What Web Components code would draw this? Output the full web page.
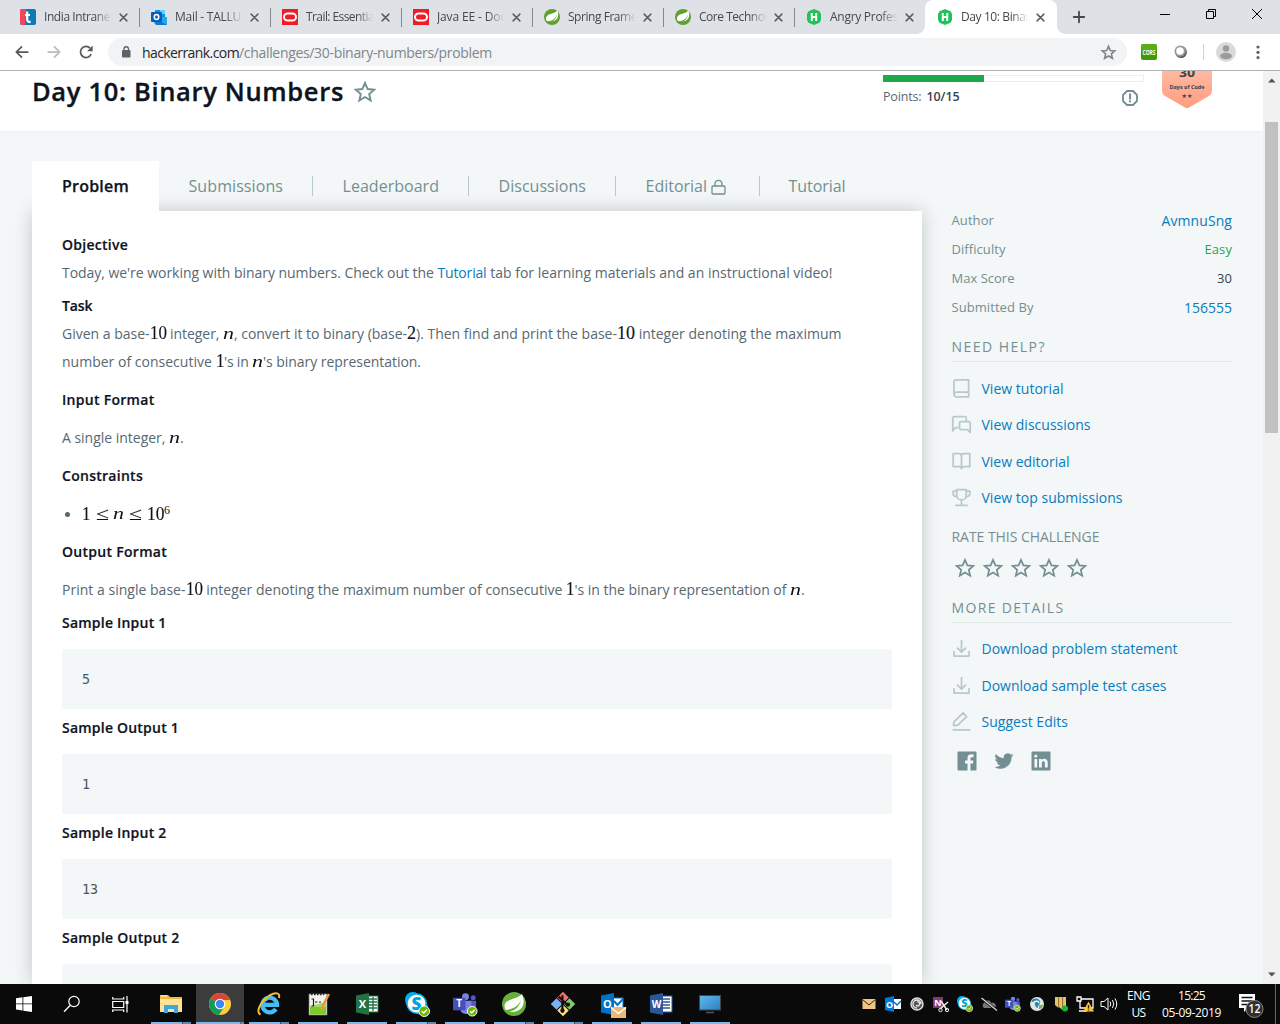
<!DOCTYPE html>
<html lang="en">
<head>
<meta charset="utf-8">
<title>Day 10: Binary Numbers</title>
<style>
html,body{margin:0;padding:0;overflow:hidden}
body{width:1280px;height:1024px;font-family:"Open Sans","Noto Sans",sans-serif;background:#f3f7f7}
</style>
</head>
<body>
<app-screen></app-screen>
<script>
const fits=[];
/* Text run that occupies an exact advance width */
class FitText extends HTMLElement{
  connectedCallback(){
    if(!this.shadowRoot){
      this.attachShadow({mode:'open'}).innerHTML='<style>:host{display:inline-block;white-space:pre;flex:none}:host([stretch]) span{display:inline-block;transform-origin:0 50%}</style><span><slot></slot></span>';
      fits.push(this);
    }
  }
  fit(){
    const w=parseFloat(this.getAttribute('w'));
    if(!w)return;
    const s=this.shadowRoot.querySelector('span');
    this.style.width='auto';this.style.letterSpacing='0px';s.style.transform='none';
    const n=s.getBoundingClientRect().width;
    if(this.hasAttribute('stretch'))s.style.transform=`scaleX(${w/n})`;
    else this.style.letterSpacing=((w-n)/this.textContent.length)+'px';
    this.style.width=w+'px';
  }
}
const star='<path d="M12 2.2l2.9 6.6 7.1.7-5.4 4.7 1.6 7L12 17.5l-6.2 3.7 1.6-7L2 9.5l7.1-.7z"/>';
const svg=(vb,body,attrs='')=>`<svg viewBox="${vb}" ${attrs}>${body}</svg>`;
const line=(body,w=2)=>svg('0 0 24 24',body,`fill="none" stroke="currentColor" stroke-width="${w}" stroke-linecap="round" stroke-linejoin="round"`);
const T=(x,y,s,t,f='#fff',b=700)=>`<text x="${x}" y="${y}" font-size="${s}" font-weight="${b}" fill="${f}" text-anchor="middle" font-family="Open Sans,sans-serif">${t}</text>`;
const teams=`<circle cx="13" cy="4" r="3.6" fill="#7b83eb"/><circle cx="21" cy="5" r="2.6" fill="#5059c9"/><path d="M17 8h7v7a4 4 0 0 1-7 2z" fill="#5059c9"/><path d="M8 8h11v9a6 6 0 0 1-11 2z" fill="#7b83eb"/><rect y="5" width="13" height="13" fill="#464eb8"/>${T(6.5,15,10.5,'T')}`;
const tick=(x,y,r)=>`<circle cx="${x}" cy="${y}" r="${r}" fill="#6bb700" stroke="#fff" stroke-width="1"/><path d="M${x-r*.45} ${y}l${r*.35} ${r*.35} ${r*.6}-${r*.65}" fill="none" stroke="#fff" stroke-width="1.5"/>`;
const skype=`<circle cx="8" cy="8" r="8" fill="#00aff0"/><circle cx="16" cy="16" r="7.5" fill="#00aff0"/><circle cx="12" cy="12" r="10" fill="#fff" stroke="#00aff0" stroke-width="1.500"/><text x="12" y="18.500" font-size="18" font-weight="800" fill="#00a4e4" text-anchor="middle" font-family="Open Sans">S</text>`;
const leaf=`<circle cx="12" cy="12" r="12" fill="#68b03c"/><path d="M3 17C0 6 13 9 20 2c4 9 1 18-10 18-3 0-5-1-7-3z" fill="#fff"/><path d="M4 18c6-1 12-3 15-10-2 9-9 12-14 12z" fill="#68b03c"/>`;
const ICONS={
  t:svg('0 0 16 16','<rect width="16" height="16" rx="2" fill="#0c7cb5"/><path d="M2 0h4L5 16H2a2 2 0 0 1-2-2V2a2 2 0 0 1 2-2z" fill="#f5455c"/><path d="M7.2 2.5v8c0 2 1.4 2.6 3.4 2.3M5 6h5" stroke="#fff" stroke-width="2.2" fill="none"/>'),
  outlookfav:svg('0 0 16 16','<path d="M4 1h10v9H4z" fill="#1490df"/><path d="M9 1h5v4H9z" fill="#50d9ff"/><path d="M4 5h5v5H4z" fill="#0f6cbd"/><path d="M3 8h13v8H5l-2-2z" fill="#28a8ea"/><path d="M3 8l13 8H5z" fill="#0f78d4"/><rect y="3" width="11" height="10" rx="1" fill="#075db5"/><ellipse cx="5.5" cy="8" rx="2.2" ry="2.5" fill="none" stroke="#fff" stroke-width="1.6"/>'),
  oracle:svg('0 0 16 16','<rect width="16" height="16" fill="#ee1c25"/><rect x="2" y="4.5" width="12" height="7" rx="3.5" fill="none" stroke="#fff" stroke-width="2"/>'),
  spring:svg('0 0 16 16','<circle cx="8" cy="8" r="8" fill="#5fa02f"/><path d="M2 11C1 4 9 6 13.500 1.500c2 6 0 11-7 11-2 0-3.500-.5-4.500-1.500z" fill="#fff"/><path d="M3 12.500c4 0 8-2 10-7-1 6-5.500 8-9.500 8z" fill="#5fa02f"/>'),
  hr:svg('0 0 16 16','<path d="M8 0l5.500 2.300L15 5v6l-1.500 2.700L8 16l-5.500-2.300L1 11V5l1.500-2.700z" fill="#20c25a"/><path d="M5.800 4v8M10.200 4v8M5.800 8h4.400" stroke="#fff" stroke-width="2" fill="none"/>'),
  close:line('<path d="M3 3l18 18M21 3L3 21"/>',4),
  plus:line('<path d="M12 1.500v21M1.500 12h21"/>',3.600),
  min:svg('0 0 12 12','<path d="M1 6.500h10" stroke="#000"/>'),
  restore:svg('0 0 12 12','<path d="M1.500 3.500h7v7h-7zM3.500 3.500v-2h7v7h-2" fill="none" stroke="#000"/>'),
  wclose:svg('0 0 12 12','<path d="M1 1l10 10M11 1L1 11" stroke="#000"/>'),
  back:svg('0 0 24 24','<path d="M23 12H3M12 2.500L2.500 12l9.500 9.500" fill="none" stroke="currentColor" stroke-width="3"/>'),
  fwd:svg('0 0 24 24','<path d="M1 12h20M12 2.500l9.500 9.500-9.500 9.500" fill="none" stroke="currentColor" stroke-width="3"/>'),
  reload:svg('0 0 24 24','<path d="M20.800 15.500A9.500 9.500 0 1 1 19 5.500" fill="none" stroke="currentColor" stroke-width="3"/><path d="M23.500 1v9.500H14z" fill="currentColor"/>'),
  padlock:svg('0 0 10 14','<rect y="5" width="8.500" height="7.500" rx="1" fill="#5f6368"/><path d="M2 5.500V4a2.250 2.250 0 0 1 4.500 0v1.500" fill="none" stroke="#5f6368" stroke-width="1.300"/>'),
  starM:svg('0 0 24 24',star,'fill="none" stroke="currentColor" stroke-width="2.100"'),
  starB:svg('0 0 24 24',star,'fill="none" stroke="currentColor" stroke-width="2.600"'),
  cors:svg('0 0 16 16','<rect width="16" height="16" rx="2" fill="#3f9a05"/><rect y="0" width="16" height="7" rx="2" fill="#58ad19"/><text x="8" y="10.500" font-size="6.500" textLength="13" lengthAdjust="spacingAndGlyphs" font-weight="700" text-anchor="middle" fill="#fff" font-family="Open Sans">CORS</text>'),
  orb:svg('0 0 16 16','<circle cx="8" cy="8" r="6" fill="#777"/><circle cx="7.300" cy="7.300" r="5.800" fill="#999"/><circle cx="7" cy="7" r="3.800" fill="#fff"/><path d="M3 11c4 4 10 1 10-5 2 7-5 11-10 5z" fill="#555"/>'),
  avatar:svg('0 0 20 20','<circle cx="10" cy="10" r="10" fill="#dadada"/><circle cx="10" cy="6.500" r="3.200" fill="#9b9b9b"/><ellipse cx="10" cy="14" rx="6" ry="3.200" fill="#9b9b9b"/>'),
  dots:svg('0 0 4 16','<g fill="#5f6368"><circle cx="2" cy="3" r="1.600"/><circle cx="2" cy="8.300" r="1.600"/><circle cx="2" cy="13.600" r="1.600"/></g>'),
  info:line('<path d="M7.500 1.500h9l6 6v9l-6 6h-9l-6-6v-9z"/><path d="M12 6.500v6.500M12 16.800v.4" stroke-width="3"/>',2.800),
  lock:svg('0 0 15 16','<rect x="1" y="7" width="13" height="8" rx="1" fill="none" stroke="currentColor" stroke-width="1.300"/><path d="M4 7V4.800a3.500 3.500 0 0 1 7 0V7" fill="none" stroke="currentColor" stroke-width="1.300"/>'),
  book:line('<path d="M5 1h16v21.500H5a2.500 2.500 0 0 1-2.500-2.500V3.500A2.500 2.500 0 0 1 5 1zM3 18.500c.5-1.500 1.500-2 3-2h15"/>',2.200),
  chat:line('<path d="M7 16H4.500L1 20V4a2 2 0 0 1 2-2h13a2 2 0 0 1 2 2v3M11.500 8.500H21a2 2 0 0 1 2 2V22l-3.500-3.500h-8a2 2 0 0 1-2-2v-6a2 2 0 0 1 2-2z"/>',2.200),
  open:line('<path d="M12 5a3 3 0 0 0-3-3H1.500v16.500H9a3 3 0 0 1 3 2.500 3 3 0 0 1 3-2.500h7.500V2H15a3 3 0 0 0-3 3zM12 5v16"/>',2.200),
  cup:line('<path d="M6 2h12v7c0 4-3 6-6 6s-6-2-6-6zM6 4H1.500v3c0 3 2 4 5 4M18 4h4.500v3c0 3-2 4-5 4M12 15v6M5 22h14"/>',2.200),
  down:line('<path d="M12 2v14M7 11.500l5 5 5-5M2.500 16v5.500h19V16"/>',2.200),
  pen:line('<path d="M2 17l.5-4.500L14 1.200l4.500 4.500L7 17zM1.500 22.500h21"/>',2.200),
  fb:svg('0 0 20 20','<rect x=".5" y=".5" width="19" height="19" rx="1" fill="#738f93"/><path d="M13.500 20v-7.600H16l.4-3h-2.900V7.600c0-.9.3-1.400 1.500-1.400h1.600V3.500c-4-.5-6.100.4-6.100 3.600v2.300H8v3h2.500V20z" fill="#f3f7f7"/>'),
  tw:svg('0 0 24 24','<path fill="#738f93" transform="translate(.6 .6) scale(.95)" d="M24 4.600a10 10 0 0 1-2.800.8 5 5 0 0 0 2.100-2.700 10 10 0 0 1-3.100 1.200 4.900 4.900 0 0 0-8.400 4.500A14 14 0 0 1 1.700 3.100a4.900 4.900 0 0 0 1.500 6.600A5 5 0 0 1 1 9v.1a4.900 4.900 0 0 0 3.900 4.800 5 5 0 0 1-2.200.1 4.900 4.900 0 0 0 4.600 3.400A10 10 0 0 1 0 19.500 14 14 0 0 0 21.500 7.100 10 10 0 0 0 24 4.600z"/>'),
  li:svg('0 0 20 20','<rect x=".5" y=".5" width="19" height="19" rx="1" fill="#738f93"/><g fill="#f3f7f7"><circle cx="4.800" cy="5" r="1.600"/><path d="M3.400 8h2.800v8.600H3.400zM8 8h2.700v1.200c1.500-2.300 6-1.900 6 2.400v5h-2.800v-4.500c0-2.600-3.100-2.400-3.100 0v4.500H8z"/></g>'),
  badge:svg('0 0 50 37','<defs><linearGradient id="g" x2="0" y2="1"><stop stop-color="#ffb9a0"/><stop offset="1" stop-color="#ff9d80"/></linearGradient></defs><path d="M0 0h50v20q0 3-3 5L27 36.500q-2 1-4 0L3 25q-3-2-3-5z" fill="url(#g)"/><text x="25" y="6.300" font-size="13" textLength="16" lengthAdjust="spacingAndGlyphs" font-weight="700" text-anchor="middle" fill="#39424e" font-family="Open Sans">30</text><text x="25" y="18" font-size="6" textLength="35" lengthAdjust="spacingAndGlyphs" font-weight="700" text-anchor="middle" fill="#39424e" font-family="Open Sans">Days of Code</text><text x="25" y="26.500" font-size="6" text-anchor="middle" fill="#39424e" font-family="DejaVu Sans">★★</text>'),
  win:svg('0 0 16 16','<path d="M0 2.200l6.500-.9v6.200H0zM7.300 1.200L16 0v7.500H7.300zM0 8.300h6.500v6.200L0 13.600zM7.300 8.300H16V16l-8.700-1.200z" fill="#fff"/>'),
  search:svg('0 0 18 18','<circle cx="11" cy="6.500" r="5.200" fill="none" stroke="#fff" stroke-width="1.200"/><path d="M7.300 10.300L1 16.800" stroke="#fff" stroke-width="1.300"/>'),
  task:svg('0 0 17 17','<g fill="none" stroke="#fff" stroke-width="1.200"><path d="M.7 1v2h11V1M.7 16v-2h11v2M.7 5.500h11v6H.7z"/><path d="M15 0v16.500"/></g><rect x="13.500" y="5" width="3" height="3" fill="#fff"/>'),
  folder:svg('0 0 24 24','<path d="M1 3h8l2 2h12v15H1z" fill="#eebc45"/><path d="M1 7h22v13H1z" fill="#ffe394"/><path d="M5 21v-8h14v8h-4v-4H9v4z" fill="#3fa7dd"/><path d="M2 4h6" stroke="#fff3c5" stroke-width="1"/>'),
  chrome:svg('0 0 24 24','<circle cx="12" cy="12" r="11" fill="#fcd03e"/><path d="M12 12L2.500 6.500A11 11 0 0 1 21.500 6.500L22 8H12z" fill="#db4437"/><path d="M2.500 6.500A11 11 0 0 0 11 23l5-8-4-3z" fill="#0f9d58"/><circle cx="12" cy="12" r="5.300" fill="#fff"/><circle cx="12" cy="12" r="4.200" fill="#4285f4"/>'),
  ie:svg('0 0 24 24','<path d="M18.800 17A7.300 7.300 0 1 1 20 12.800H6" fill="none" stroke="#45bdf2" stroke-width="4.300"/><path d="M3.500 22.500C-2 20 4 9 12.500 3.500 18 .5 23.500 0 22 6" fill="none" stroke="#f6c12d" stroke-width="2"/>'),
  npp:svg('0 0 24 24','<rect x="3" y="2" width="18" height="21" fill="#f4f4ee" stroke="#777" stroke-width=".7"/><rect x="4" y="14" width="16" height="8.500" fill="#7ccb28"/><path d="M4 14l16-4v5H4z" fill="#a4db62"/><path d="M5 2.500h13" stroke="#222" stroke-width="1.500" stroke-dasharray="1.500 1.500"/><path d="M5.500 7h2v7h-2M9 10h2.500m1.500 0h2" stroke="#222" stroke-width="1.200" fill="none"/><path d="M23 2l-7 13-1.500 3" fill="none" stroke="#e79b38" stroke-width="2.500"/>'),
  excel:svg('0 0 24 24',`<rect x="12" y="4" width="11" height="16" fill="#fff" stroke="#217346"/><path d="M14 7h8M14 10h8M14 13h8M14 16h8M18 5v14" stroke="#217346" stroke-width="1.300"/><path d="M1 3.500L14 1v22L1 20.500z" fill="#217346"/>${T(7.500,16,11,'X')}`),
  word:svg('0 0 24 24',`<rect x="12" y="4" width="11" height="16" fill="#fff" stroke="#2b579a"/><path d="M14 7h7M14 10h7M14 13h7M14 16h7" stroke="#2b579a" stroke-width="1.300"/><path d="M1 3.500L14 1v22L1 20.500z" fill="#2b579a"/>${T(7.500,16,10,'W')}`),
  skype:svg('0 0 26 26',skype+tick(20,20,5.500)),
  teams:svg('0 0 26 24',teams+tick(20,19,5)),
  leaf:svg('0 0 24 24',leaf),
  git:svg('0 0 24 24','<g transform="rotate(45 12 12)"><path d="M4 4h7.500v7.500H4z" fill="#f27373"/><path d="M12.500 4H20v7.500h-7.500z" fill="#86c766"/><path d="M4 12.500h7.500V20H4z" fill="#7db0f2"/><path d="M12.500 12.500H20V20h-7.500z" fill="#ffdf78"/></g><path d="M11.500 4v16M8 5l8 8" stroke="#111" stroke-width="2"/><circle cx="11.500" cy="18" r="2" fill="#111"/><circle cx="16.500" cy="12.500" r="2" fill="#111"/>'),
  outlook:svg('0 0 26 26',`<rect x="12" y="6" width="11" height="12" fill="#fff" stroke="#0072c6"/><path d="M14 9l3.500 4L23 7" stroke="#0072c6" stroke-width="2" fill="none"/><path d="M1 3.500L14 1v22L1 20.500z" fill="#0072c6"/>${T(7.500,16,11,'O')}<rect x="11" y="15" width="15" height="11" fill="#efb774"/><path d="M11 15.500l7.500 6 7.500-6" fill="none" stroke="#fff" stroke-width="1.500"/>`),
  pc:svg('0 0 24 24','<defs><linearGradient id="p" x2="1" y2="1"><stop stop-color="#62b9ed"/><stop offset="1" stop-color="#2a7fc2"/></linearGradient></defs><rect x="1.500" y="3.500" width="21" height="14.500" fill="url(#p)" stroke="#444"/><path d="M8 20.500h8" stroke="#555" stroke-width="1.500"/>'),
  mail:svg('0 0 16 16','<rect x="1.500" y="3" width="13" height="10" fill="#f2c583"/><path d="M1.500 3.500L8 9l6.500-5.500" stroke="#2a2118" fill="none"/>'),
  outS:svg('0 0 16 16',`<rect x="8" y="3" width="8" height="10" fill="#fff"/><path d="M9 6l3 3 4-4" stroke="#0072c6" fill="none" stroke-width="1.500"/><path d="M0 2l9-2v16l-9-2z" fill="#0078d7"/>${T(4.500,11.500,9,'O')}`),
  swirl:svg('0 0 16 16','<circle cx="8" cy="8" r="6" fill="#555" stroke="#ddd" stroke-width="1.500"/><path d="M12 8a4 4 0 1 0-4 4M8 6a2 2 0 1 1-1 3" fill="none" stroke="#eee" stroke-width="1.300"/>'),
  one:svg('0 0 16 16',`<rect y="1" width="10" height="11" fill="#80397b"/>${T(5,10,9,'N')}<path d="M8 5l6 9M15 6l-8 7" stroke="#eee" stroke-width="1.500"/><circle cx="7.500" cy="14" r="1.700" fill="none" stroke="#eee"/><circle cx="14" cy="14" r="1.700" fill="none" stroke="#eee"/>`),
  cloud:svg('0 0 16 16','<path d="M3 12a3 3 0 0 1 0-5c1-3 6-4 7 0 4-1 6 2 4 5z" fill="#777"/><path d="M0 2l16 12.500" stroke="#0b0b0b" stroke-width="2.600"/><path d="M.5 2l15.500 12.500" stroke="#ddd" stroke-width="1.200"/>'),
  globe:svg('0 0 16 16','<circle cx="8" cy="8" r="7" fill="#dfe6e8"/><path d="M2 5C5 1 11 2 11 6s-3 3-2 6C5 11 7 8 5 7z" fill="#2d86a7"/><path d="M10 9c2 1 3-1 4 0-1 3-2 4-4 4z" fill="#78ae48"/><path d="M4 8c1-3 5-4 6-1" stroke="#fff" fill="none" stroke-width="1.300"/>'),
  bars:svg('0 0 16 16','<path d="M2 1h3.500v11L2 9zM6 1h3.500v13L6 11zM10 1h3v12l-3-2z" fill="#e7c565"/><path d="M5.700 1v10M9.700 1v10" stroke="#a98a38" stroke-width=".6"/><circle cx="12" cy="12.500" r="3" fill="#18b83a"/>'),
  net:svg('0 0 18 16','<path d="M1 1h4v4H1zM5 3h12v9H4V5M3 15h8" fill="none" stroke="#fff" stroke-width="1.300"/><path d="M12.500 5.500L18 15.500H7z" fill="#ffc526"/><path d="M12.500 9v3.500M12.500 13.500v1" stroke="#222" stroke-width="1.300"/>'),
  vol:svg('0 0 18 16','<path d="M1 5.500h3l4-3.500v12L4 10.500H1z" fill="none" stroke="#fff"/><path d="M10 5.500q1.500 2.500 0 5M12.500 4q2.500 4 0 8M15 2.500q3.500 5.500 0 11" stroke="#fff" fill="none"/>'),
  note:svg('0 0 26 24',`<path d="M0 0h16v14H9l-4 4v-4H0z" fill="#fff"/><path d="M2.500 3.500h11M2.500 7h11M2.500 10.500h6" stroke="#111" stroke-width="1.300"/><circle cx="15.500" cy="15" r="8.500" fill="#303030" stroke="#858585"/><text x="15.500" y="19.300" font-size="12" textLength="12" lengthAdjust="spacingAndGlyphs" font-weight="600" fill="#fff" text-anchor="middle" font-family="Open Sans">12</text>`),
  up:svg('0 0 8 5','<path d="M0 4.500h7.500L3.800.5z" fill="#505050"/>'),
  dn:svg('0 0 8 5','<path d="M0 .5h7.500L3.800 4.500z" fill="#505050"/>')
};
class IconGlyph extends HTMLElement{
  connectedCallback(){
    if(this.shadowRoot)return;
    const w=this.getAttribute('w')||16,h=this.getAttribute('h')||w;
    this.attachShadow({mode:'open'}).innerHTML=`<style>:host{display:inline-flex;flex:none;width:${w}px;height:${h}px}svg{width:100%;height:100%;display:block;overflow:visible}</style>${ICONS[this.getAttribute('name')]}`;
  }
}
const define=(name,css,html)=>customElements.define(name,class extends HTMLElement{
  connectedCallback(){
    if(this.shadowRoot)return;
    const t=document.createElement('template');
    t.innerHTML=`<style>*{box-sizing:border-box}${css}</style>${typeof html==='function'?html(this):html}`;
    this.attachShadow({mode:'open'}).append(t.content.cloneNode(true));
  }
});

define('browser-tab',`
:host{display:flex;align-items:center;width:131px;height:34px;flex:none;padding-left:12px;font-size:12px;color:#45494d;position:relative}
:host(:not([last]):not([active]))::after{content:"";position:absolute;right:-1px;top:8px;height:19px;width:1px;background:#85898d}
:host([active]){background:#fff;border-radius:8px 8px 0 0;width:132px}
:host([active])::before,:host([active])::after{content:"";position:absolute;bottom:0;width:8px;height:8px}
:host([active])::before{left:-8px;background:radial-gradient(circle at 0 0,transparent 7.5px,#fff 8px)}
:host([active])::after{right:-8px;background:radial-gradient(circle at 100% 0,transparent 7.5px,#fff 8px)}
.t{width:72px;margin-left:8px;overflow:hidden;-webkit-mask-image:linear-gradient(90deg,#000 70%,transparent 94%);white-space:nowrap;line-height:20px}
icon-glyph.c{color:#5a5d61;margin-left:3px}`,
e=>`<icon-glyph name="${e.getAttribute('icon')}"></icon-glyph><div class="t"><fit-text w="${e.getAttribute('tw')}">${e.getAttribute('label')}</fit-text></div><icon-glyph class="c" name="close" w="9"></icon-glyph>`);

define('tab-strip',`
:host{display:flex;height:34px;background:#dee1e6;padding-left:8px}
.p{width:44px;display:flex;align-items:center;justify-content:center;color:#45484c}
.w{display:flex;margin-left:auto;align-items:center;height:28px}
.w span{width:46px;display:flex;justify-content:center}`,
`<browser-tab icon="t" label="India Intrane" tw="66"></browser-tab><browser-tab icon="outlookfav" label="Mail - TALLU" tw="66"></browser-tab><browser-tab icon="oracle" label="Trail: Essentia" tw="68"></browser-tab><browser-tab icon="oracle" label="Java EE - Doc" tw="69"></browser-tab><browser-tab icon="spring" label="Spring Frame" tw="69"></browser-tab><browser-tab icon="spring" label="Core Technol" tw="68"></browser-tab><browser-tab last icon="hr" label="Angry Profes" tw="68"></browser-tab><browser-tab active icon="hr" label="Day 10: Binar" tw="69"></browser-tab>
<div class="p"><icon-glyph name="plus" w="12"></icon-glyph></div><div class="w"><span><icon-glyph name="min" w="12"></icon-glyph></span><span><icon-glyph name="restore" w="12"></icon-glyph></span><span><icon-glyph name="wclose" w="12"></icon-glyph></span></div>`);

define('nav-bar',`
:host{display:flex;align-items:center;height:37px;background:#fff;border-bottom:1px solid #b1b1b1;padding-left:15px;color:#55595e}
.f{color:#b9bbbd;margin:0 18px}
.pill{display:flex;align-items:center;width:1019px;height:28px;border-radius:14px;background:#f1f3f4;margin-left:15px;padding:0 11px 0 14px;font-size:14px;color:#80868b}
.pill b{font-weight:400;color:#25282b}
.pill icon-glyph[name=padlock]{margin-right:10px}
.s{margin-left:auto}
.sep{width:1px;height:16px;background:#d0d2d4;margin:0 12px 0 14px}`,
`<icon-glyph name="back" w="14"></icon-glyph><icon-glyph class="f" name="fwd" w="14"></icon-glyph><icon-glyph name="reload" w="14"></icon-glyph>
<div class="pill"><icon-glyph name="padlock" w="10" h="14"></icon-glyph><b><fit-text w="97">hackerrank.com</fit-text></b><fit-text w="253">/challenges/30-binary-numbers/problem</fit-text><icon-glyph class="s" name="starB" w="15"></icon-glyph></div>
<icon-glyph name="cors" w="16" style="margin-left:14px"></icon-glyph><icon-glyph name="orb" w="16" style="margin-left:16px"></icon-glyph><span class="sep"></span><icon-glyph name="avatar" w="20"></icon-glyph><icon-glyph name="dots" w="4" h="16" style="margin-left:20px"></icon-glyph>`);

define('page-header',`
:host{display:flex;height:60px;background:#fff;padding:0 51px 0 32px;box-shadow:0 1px 2px rgba(0,0,0,.04);flex:none}
h1{margin:2px 0 0;font-size:25.500px;line-height:36px;height:36px;color:#0e141e;display:flex;font-weight:600;-webkit-text-stroke:.35px}
.st{color:#738f93;margin:10px 0 0 10px}
.pr{margin-left:auto;width:261px;padding-top:4px}
.bar{height:7px;border:1px solid #ececec;display:flex}.bar i{width:101px;height:7px;margin:-1px 0 0 -1px;background:#1ba94c}
.pt{display:flex;align-items:center;justify-content:space-between;font-size:12.500px;color:#576871;height:22px;margin-top:3px;padding-right:6px}
.pt b{margin-left:5px;color:#39424e;font-weight:600}
.bd{margin-left:18px;height:38px}`,
`<h1><fit-text w="312">Day 10: Binary Numbers</fit-text></h1><icon-glyph class="st" name="starM" w="22"></icon-glyph>
<div class="pr"><div class="bar"><i></i></div><div class="pt"><span><fit-text w="38.500">Points:</fit-text><b><fit-text w="33">10/15</fit-text></b></span><icon-glyph name="info" w="16" style="color:#738f93;margin-top:4px"></icon-glyph></div></div>
<div class="bd"><icon-glyph name="badge" w="50" h="37"></icon-glyph></div>`);

define('page-tabs',`
:host{display:flex;height:50px;font-size:16px;color:#738f93;align-items:center;position:relative;z-index:1}
div{display:flex;align-items:center;height:20px;padding:0 29px;border-right:1px solid #b7c9cc;line-height:20px}
div:last-child{border:0}
.a{height:50px;background:#fff;border:0;padding:0 30px;width:127px;color:#0e141e;font-weight:600;-webkit-text-stroke:.25px}`,
`<div class="a"><fit-text w="67">Problem</fit-text></div><div style="padding-left:29.500px"><fit-text w="94.500">Submissions</fit-text></div><div style="padding-left:29.500px"><fit-text w="96.500">Leaderboard</fit-text></div><div style="padding-left:29.500px"><fit-text w="87.500">Discussions</fit-text></div><div style="padding-left:29.500px"><fit-text w="61.500">Editorial</fit-text><icon-glyph name="lock" w="15" h="16" style="margin:1px 4px 0 3.500px"></icon-glyph></div><div><fit-text w="57">Tutorial</fit-text></div>`);

define('math-run',`:host{display:inline;font-family:"Liberation Serif",serif;font-size:18px;color:#0e141e;line-height:var(--math-lh,1px);-webkit-text-stroke:.15px}:host([i]){font-style:italic;font-size:16.500px;-webkit-text-stroke:0}`,`<slot></slot>`);
define('text-line',`:host{display:flex;align-items:baseline;height:28px;line-height:28px;font-size:14px;color:#576871;white-space:pre}
:host([h]){font-weight:600;color:#0e141e;-webkit-text-stroke:.2px}:host([math]){--math-lh:28px;align-items:center}`,`<slot></slot>`);
define('sample-block',`:host{display:block;margin-top:5px}pre{margin:12px 0 0;height:60px;border-radius:2px;background:#f3f7f7;padding:0 20px;font:13.333px/62px "DejaVu Sans Mono",monospace;color:#4d5661}`,
e=>`<text-line h><fit-text w="${e.getAttribute('w')}">${e.getAttribute('label')}</fit-text></text-line><pre>${e.getAttribute('value')}</pre>`);

const F=(w,t)=>`<fit-text w="${w}">${t}</fit-text>`,M=(w,t)=>`<math-run><fit-text stretch w="${w}">${t}</fit-text></math-run>`,N=w=>`<math-run i><fit-text stretch w="${w}">n</fit-text></math-run>`;
define('problem-card',`
:host{display:block;flex:1;background:#fff;box-shadow:0 0 18px rgba(0,0,0,.2);padding:20px 30px 0;clip-path:inset(-20px -30px 0 -32px)}
a{color:#097bbf}.m5{margin-top:5px}.m10{margin-top:10px}
.dot{width:5px;height:5px;border-radius:50%;background:#576871;margin:0 12px 0 3px}
sup{font:12px/28px "Liberation Serif",serif;margin-bottom:8px;color:#0e141e}`,
`<text-line h>${F(66,'Objective')}</text-line>
<text-line>${F(375.500,"Today, we're working with binary numbers. Check out the ")}<a>${F(49,'Tutorial')}</a>${F(346,' tab for learning materials and an instructional video!')}</text-line>
<text-line h class="m5">${F(30.500,'Task')}</text-line>
<text-line>${F(87.500,'Given a base-')}${M(17,'10')}${F(56.500,' integer, ')}${N(11)}${F(173,', convert it to binary (base-')}${M(9,'2')}${F(201,'). Then find and print the base-')}${M(18,'10')}${F(206.500,' integer denoting the maximum')}</text-line>
<text-line>${F(153.500,'number of consecutive ')}${M(8.500,'1')}${F(28,"'s in ")}${N(11)}${F(158,"'s binary representation.")}</text-line>
<text-line h class="m10">${F(92.500,'Input Format')}</text-line>
<text-line class="m10">${F(107,'A single integer, ')}${N(11)}${F(4,'.')}</text-line>
<text-line h class="m10">${F(81,'Constraints')}</text-line>
<text-line math class="m10"><i class="dot"></i>${M(8.500,'1')}${F(5,' ')}${M(13,'≤')}${F(4.500,' ')}${N(11)}${F(5,' ')}${M(13,'≤')}${F(4.500,' ')}${M(17.500,'10')}<sup>6</sup></text-line>
<text-line h class="m10">${F(105,'Output Format')}</text-line>
<text-line class="m10">${F(123.500,'Print a single base-')}${M(17,'10')}${F(363.500,' integer denoting the maximum number of consecutive ')}${M(8.500,'1')}${F(215.500,"'s in the binary representation of ")}${N(11)}${F(4,'.')}</text-line>
<sample-block label="Sample Input 1" w="104.500" value="5"></sample-block><sample-block label="Sample Output 1" w="117" value="1"></sample-block><sample-block label="Sample Input 2" w="104.500" value="13"></sample-block><sample-block label="Sample Output 2" w="117.500" value=""></sample-block>`);

define('side-link',`:host{display:flex;align-items:center;height:36.500px;font-size:14px;color:#097bbf}icon-glyph{color:#b7c9cc;margin:0 10.500px 0 .5px}`,
e=>`<icon-glyph name="${e.getAttribute('icon')}" w="19"></icon-glyph>${F(e.getAttribute('w'),e.getAttribute('label'))}`);
define('side-bar',`
:host{display:block;width:280.500px;margin-left:.5px;padding-top:74px;color:#738f93}
.r{display:flex;justify-content:space-between;align-items:center;height:29px;font-size:13px}
.r span{font-size:14px;color:#097bbf;padding-top:1px}
.h{font-size:14px;height:27px;line-height:23px;border-bottom:1px solid #e3eaea;display:flex}
.stars{display:flex;gap:8px;padding-left:3.500px;margin-top:11px}
.so{display:flex;gap:17px;padding-left:5.500px;margin-top:10.500px}`,
`<div class="r">${F(42.500,'Author')}<span>${F(70.500,'AvmnuSng')}</span></div><div class="r">${F(54,'Difficulty')}<span style="color:#1ba94c;font-size:13px;padding:0">${F(27.500,'Easy')}</span></div><div class="r">${F(63,'Max Score')}<span style="color:#39424e;font-size:13px;padding:0">${F(15,'30')}</span></div><div class="r">${F(82,'Submitted By')}<span>${F(48,'156555')}</span></div>
<div class="h" style="margin-top:14px">${F(94.500,'NEED HELP?')}</div>
<div style="padding-top:8px"><side-link icon="book" label="View tutorial" w="82"></side-link><side-link icon="chat" label="View discussions" w="109"></side-link><side-link icon="open" label="View editorial" w="88"></side-link><side-link icon="cup" label="View top submissions" w="141"></side-link></div>
<div style="font-size:14px;line-height:20px;height:20px;margin-top:11px">${F(148,'RATE THIS CHALLENGE')}</div>
<div class="stars">${'<icon-glyph name="starM" w="20"></icon-glyph>'.repeat(5)}</div>
<div class="h" style="margin-top:18px">${F(113,'MORE DETAILS')}</div>
<div style="padding-top:7.500px"><side-link icon="down" label="Download problem statement" w="196"></side-link><side-link icon="down" label="Download sample test cases" w="185"></side-link><side-link icon="pen" label="Suggest Edits" w="86.500"></side-link></div>
<div class="so"><icon-glyph name="fb" w="20"></icon-glyph><icon-glyph name="tw" w="20"></icon-glyph><icon-glyph name="li" w="20"></icon-glyph></div>`);

define('web-page',`
:host{display:flex;height:913px;overflow:hidden}
.p{width:1263px;display:flex;flex-direction:column;background:#f3f7f7}
.b{display:flex;flex:1;min-height:0;overflow:hidden;padding-left:32px;gap:29px}
.l{width:890px;display:flex;flex-direction:column;padding-top:30px}
.l problem-card{min-height:0}
.s{width:17px;background:#f1f1f1;display:flex;flex-direction:column;align-items:center;padding:7px 0 7px}
.s i{width:13px;height:311px;background:#c1c1c1;margin:39px 0 auto}`,
`<div class="p"><page-header></page-header><div class="b"><div class="l"><page-tabs></page-tabs><problem-card></problem-card></div><side-bar></side-bar></div></div><div class="s"><icon-glyph name="up" w="8" h="5"></icon-glyph><i></i><icon-glyph name="dn" w="8" h="5"></icon-glyph></div>`);

define('task-app',`
:host{display:flex;width:48px;height:40px;align-items:center;justify-content:center;position:relative;flex:none;margin-right:1px}
:host([on])::after{content:"";position:absolute;left:4px;width:40px;bottom:0;height:2px;background:#76b9ed}
:host([multi])::after{background:linear-gradient(90deg,#76b9ed 31px,#2f536e 31px,#2f536e 32px,#5a8db5 32px)}
:host([hot]){background:#3c3c3c}:host([hot])::after{left:0;width:48px;background:linear-gradient(90deg,#76b9ed 44px,#2f536e 44px,#5a8db5 45px)}
:host([sys]){margin:0}`,
e=>`<icon-glyph name="${e.getAttribute('icon')}" w="${e.getAttribute('w')||24}"></icon-glyph>`);
define('task-bar',`
:host{display:flex;height:40px;background:#0a0a0a;color:#fff;font-size:12px;align-items:center}
.tray{display:flex;margin-left:auto;align-items:center}
.tray span{width:24px;display:flex;justify-content:center}
.c{display:flex;flex-direction:column;align-items:center;line-height:17px;margin-top:-1px}
.e{width:5px;height:40px;border-left:1px solid #666}`,
`<task-app sys icon="win" w="16"></task-app><task-app sys icon="search" w="18"></task-app><task-app sys icon="task" w="17"></task-app><div style="width:3px"></div>
<task-app on multi icon="folder"></task-app><task-app on hot icon="chrome"></task-app><task-app on multi icon="ie"></task-app><task-app on icon="npp"></task-app><task-app on icon="excel"></task-app><task-app on multi icon="skype" w="25" style="padding-left:2px;box-sizing:border-box"></task-app><task-app on icon="teams" w="25"></task-app><task-app on multi icon="leaf"></task-app><task-app on multi icon="git" w="26"></task-app><task-app on icon="outlook" w="26" style="padding:2px 0 0 2px;box-sizing:border-box"></task-app><task-app on icon="word"></task-app><task-app on icon="pc"></task-app>
<div class="tray">${['mail','outS','swirl','one','skype','cloud','teams','globe','bars','net','vol'].map(n=>`<span><icon-glyph name="${n}" w="${n=='net'||n=='vol'?18:16}" h="16"></icon-glyph></span>`).join('')}
<div class="c" style="width:35px;margin-left:0">${F(23,'ENG')}${F(14,'US')}</div><div class="c" style="width:71px">${F(27,'15:25')}${F(59,'05-09-2019')}</div><icon-glyph name="note" w="26" h="24" style="margin:3px 10px 0 12px"></icon-glyph><div class="e"></div></div>`);

define('app-screen',`:host{display:flex;flex-direction:column;width:1280px;height:1024px;overflow:hidden}`,
`<tab-strip></tab-strip><nav-bar></nav-bar><web-page></web-page><task-bar></task-bar>`);
customElements.define('icon-glyph',IconGlyph);
customElements.define('fit-text',FitText);
const fitAll=()=>fits.forEach(f=>f.fit());
fitAll();
document.fonts.ready.then(fitAll);
</script>
</body>
</html>
